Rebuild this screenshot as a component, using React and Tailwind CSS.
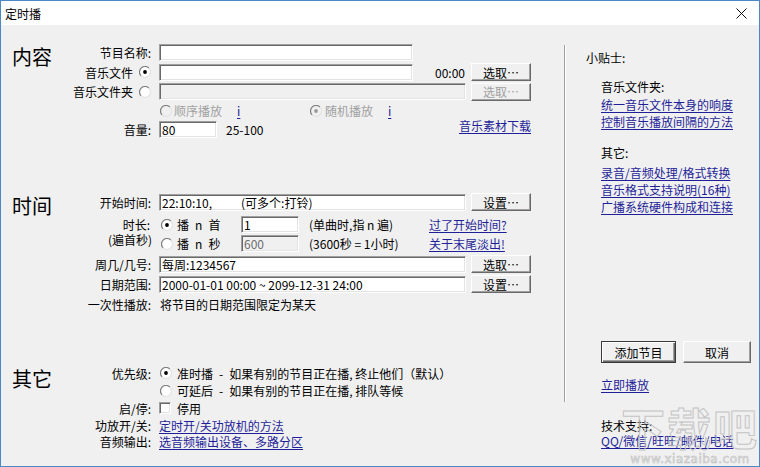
import React from "react";

const LINK = "text-[#1f1f99] underline underline-offset-[2px] decoration-[1px] whitespace-nowrap";

function Radio({ checked = false, disabled = false }) {
  return (
    <svg width="12" height="12" viewBox="0 0 12 12" className="shrink-0 block">
      <circle cx="6" cy="6" r="5" fill={disabled ? "#f0f0f0" : "#ffffff"} />
      <path d="M2.11 9.89 A5.5 5.5 0 0 1 9.89 2.11" fill="none" stroke="#7e7e7e" strokeWidth="1.2" />
      <path d="M9.89 2.11 A5.5 5.5 0 0 1 2.11 9.89" fill="none" stroke="#e4e4e4" strokeWidth="1.2" />
      {checked && <circle cx="6" cy="6" r="1.9" fill={disabled ? "#9a9a9a" : "#000000"} />}
    </svg>
  );
}

function Check() {
  return (
    <div className="w-[12px] h-[12px] shrink-0 bg-white border border-t-[#a0a0a0] border-l-[#a0a0a0] border-r-white border-b-white shadow-[inset_1px_1px_0_#696969,inset_-1px_-1px_0_#e3e3e3]" />
  );
}

function Field({ w, disabled = false, children }) {
  return (
    <div
      className={`h-[17px] ${w} shrink-0 flex items-center pl-[2px] overflow-hidden whitespace-nowrap leading-[15px] border border-t-[#a0a0a0] border-l-[#a0a0a0] border-r-white border-b-white shadow-[inset_1px_1px_0_#696969,inset_-1px_-1px_0_#e3e3e3] ${
        disabled ? "bg-[#f0f0f0] text-[#6d6d6d]" : "bg-white text-black"
      }`}
    >
      {children}
    </div>
  );
}

function Btn({ w, h = "h-[18px]", disabled = false, children }) {
  return (
    <div
      className={`${w} ${h} shrink-0 flex items-center justify-center whitespace-nowrap bg-[#f0f0f0] border border-t-white border-l-white border-r-[#696969] border-b-[#696969] shadow-[inset_-1px_-1px_0_#a0a0a0] ${
        disabled ? "text-[#a0a0a0]" : "text-black"
      }`}
    >
      {children}
    </div>
  );
}

function Label({ children }) {
  return (
    <div className="w-[68px] shrink-0 flex justify-end items-center pr-[2px] whitespace-nowrap">
      {children}
    </div>
  );
}

export default function App() {
  return (
    <div className="relative w-[760px] h-[467px] flex flex-col bg-[#f0f0f0] border border-[#4a8ac4] overflow-hidden text-[12px] leading-[17px] text-black font-['Noto_Sans_CJK_SC',sans-serif]">
      {/* title bar */}
      <div className="h-[24px] shrink-0 bg-white flex items-center justify-between pl-[4px] pr-[12px]">
        <span className="text-[12px]">定时播</span>
        <svg width="11" height="11" viewBox="0 0 11 11" className="block">
          <path d="M0.5 0.5 L10.5 10.5 M10.5 0.5 L0.5 10.5" stroke="#111" strokeWidth="1" />
        </svg>
      </div>

      {/* body */}
      <div className="flex-1 flex">
        {/* left area */}
        <div className="w-[563px] shrink-0 flex flex-col pt-[18px]">
          {/* 内容 */}
          <div className="flex">
            <div className="w-[84px] shrink-0 pl-[11px] text-[20px] leading-[28px]">内容</div>
            <div className="flex flex-col">
              <div className="h-[19px] flex items-center">
                <Label>节目名称:</Label>
                <div className="ml-[6px] flex items-center">
                  <Field w="w-[254px]" />
                </div>
              </div>
              <div className="h-[20px] flex items-center">
                <Label>
                  <span>音乐文件</span>
                  <span className="ml-[6px]"><Radio checked /></span>
                </Label>
                <div className="ml-[6px] flex items-center">
                  <Field w="w-[254px]" />
                  <div className="w-[52px] text-right">00:00</div>
                  <div className="ml-[6px]"><Btn w="w-[60px]">选取⋯</Btn></div>
                </div>
              </div>
              <div className="h-[19px] flex items-center">
                <Label>
                  <span>音乐文件夹</span>
                  <span className="ml-[6px]"><Radio /></span>
                </Label>
                <div className="ml-[6px] flex items-center">
                  <Field w="w-[307px]" disabled />
                  <div className="ml-[5px]"><Btn w="w-[60px]" disabled>选取⋯</Btn></div>
                </div>
              </div>
              <div className="h-[19px] flex items-center">
                <Label />
                <div className="ml-[6px] flex items-center">
                  <div className="w-[151px] flex items-center">
                    <span className="ml-[1px]"><Radio disabled /></span>
                    <span className="ml-[2px] text-[#a0a0a0]">顺序播放</span>
                    <span className={`ml-[15px] ${LINK}`}>i</span>
                  </div>
                  <div className="flex items-center">
                    <Radio checked disabled />
                    <span className="ml-[3px] text-[#a0a0a0]">随机播放</span>
                    <span className={`ml-[15px] ${LINK}`}>i</span>
                  </div>
                </div>
              </div>
              <div className="h-[19px] flex items-center">
                <Label>音量:</Label>
                <div className="ml-[6px] w-[372px] flex items-center">
                  <Field w="w-[58px]">80</Field>
                  <span className="ml-[9px]">25-100</span>
                  <span className={`ml-auto self-start -mt-[4px] ${LINK}`}>音乐素材下载</span>
                </div>
              </div>
            </div>
          </div>

          {/* 时间 */}
          <div className="flex mt-[53px]">
            <div className="w-[84px] shrink-0 pl-[11px] text-[20px] leading-[28px]">时间</div>
            <div className="flex flex-col">
              <div className="h-[20px] flex items-center">
                <Label>开始时间:</Label>
                <div className="ml-[6px] flex items-center">
                  <Field w="w-[307px]">
                    <span className="inline-block w-[79px]">22:10:10,</span>
                    <span>(可多个:打铃)</span>
                  </Field>
                  <div className="ml-[5px]"><Btn w="w-[60px]">设置⋯</Btn></div>
                </div>
              </div>
              <div className="flex mt-[3px]">
                <div className="w-[68px] shrink-0 flex flex-col items-end pr-[1px] pt-[2px] leading-[15px] whitespace-nowrap">
                  <span className="pr-[2px]">时长:</span>
                  <span>(遍首秒)</span>
                </div>
                <div className="ml-[6px] flex flex-col">
                  <div className="h-[19px] flex items-center">
                    <span className="ml-[2px]"><Radio checked /></span>
                    <span className="ml-[4px] w-[64px] whitespace-nowrap">播{"\u2002"}n{"\u2002"}首</span>
                    <Field w="w-[58px]">1</Field>
                    <span className="ml-[10px] w-[120px] whitespace-nowrap">(单曲时,指 n 遍)</span>
                    <span className={LINK}>过了开始时间?</span>
                  </div>
                  <div className="h-[19px] flex items-center">
                    <span className="ml-[2px]"><Radio /></span>
                    <span className="ml-[4px] w-[64px] whitespace-nowrap">播{"\u2002"}n{"\u2002"}秒</span>
                    <Field w="w-[58px]" disabled>600</Field>
                    <span className="ml-[10px] w-[120px] whitespace-nowrap">(3600秒 = 1小时)</span>
                    <span className={LINK}>关于末尾淡出!</span>
                  </div>
                </div>
              </div>
              <div className="h-[20px] mt-[1px] flex items-center">
                <Label>周几/几号:</Label>
                <div className="ml-[6px] flex items-center">
                  <Field w="w-[307px]">每周:1234567</Field>
                  <div className="ml-[5px]"><Btn w="w-[60px]">选取⋯</Btn></div>
                </div>
              </div>
              <div className="h-[20px] flex items-center">
                <Label>日期范围:</Label>
                <div className="ml-[6px] flex items-center">
                  <Field w="w-[307px]">2000-01-01 00:00 ~ 2099-12-31 24:00</Field>
                  <div className="ml-[5px]"><Btn w="w-[60px]">设置⋯</Btn></div>
                </div>
              </div>
              <div className="h-[20px] flex items-center">
                <Label>一次性播放:</Label>
                <span className="ml-[7px] whitespace-nowrap">将节目的日期范围限定为某天</span>
              </div>
            </div>
          </div>

          {/* 其它 */}
          <div className="flex mt-[50px]">
            <div className="w-[84px] shrink-0 pl-[11px] pt-[1px] text-[20px] leading-[28px]">其它</div>
            <div className="flex flex-col">
              <div className="h-[18px] flex items-center">
                <Label>优先级:</Label>
                <div className="ml-[6px] flex items-center whitespace-nowrap">
                  <span className="ml-[1px]"><Radio checked /></span>
                  <span className="ml-[5px]">准时播{"\u2002"}-{"\u2002"}如果有别的节目正在播, 终止他们（默认）</span>
                </div>
              </div>
              <div className="h-[17px] flex items-center">
                <Label />
                <div className="ml-[6px] flex items-center whitespace-nowrap">
                  <span className="ml-[1px]"><Radio /></span>
                  <span className="ml-[5px]">可延后{"\u2002"}-{"\u2002"}如果有别的节目正在播, 排队等候</span>
                </div>
              </div>
              <div className="h-[18px] flex items-center">
                <Label>启/停:</Label>
                <div className="ml-[6px] flex items-center">
                  <Check />
                  <span className="ml-[6px]">停用</span>
                </div>
              </div>
              <div className="h-[17px] flex items-center">
                <Label>功放开/关:</Label>
                <span className={`ml-[6px] ${LINK}`}>定时开/关功放机的方法</span>
              </div>
              <div className="h-[15px] flex items-center">
                <Label>音频输出:</Label>
                <span className={`ml-[6px] ${LINK}`}>选音频输出设备、多路分区</span>
              </div>
            </div>
          </div>
        </div>

        {/* separator */}
        <div className="w-[2px] h-[357px] mt-[20px] shrink-0 border-l border-l-[#a0a0a0] border-r border-r-white" />

        {/* right panel */}
        <div className="flex-1 flex flex-col items-start pl-[35px]">
          <div className="mt-[24px] -ml-[15px]">小贴士:</div>
          <div className="mt-[12px]">音乐文件夹:</div>
          <div className={`mt-[1px] ${LINK}`}>统一音乐文件本身的响度</div>
          <div className={LINK}>控制音乐播放间隔的方法</div>
          <div className="mt-[14px]">其它:</div>
          <div className={`mt-[3px] ${LINK}`}>录音/音频处理/格式转换</div>
          <div className={LINK}>音乐格式支持说明(16种)</div>
          <div className={LINK}>广播系统硬件构成和连接</div>
          <div className="mt-[126px] flex">
            <div className="w-[75px] h-[22px] flex items-center justify-center bg-[#f0f0f0] border border-[#3a3a3a] shadow-[inset_1px_1px_0_#ffffff,inset_-1px_-1px_0_#696969,inset_-2px_-2px_0_#a0a0a0]">
              添加节目
            </div>
            <div className="ml-[7px]"><Btn w="w-[68px]" h="h-[22px]">取消</Btn></div>
          </div>
          <div className={`mt-[13px] ${LINK}`}>立即播放</div>
          <div className="mt-[25px] leading-[15px]">技术支持:</div>
          <div className={`leading-[15px] ${LINK}`}>QQ/微信/旺旺/邮件/电话</div>
        </div>
      </div>

      {/* watermark */}
      <div className="absolute left-[620px] top-[400px] pointer-events-none select-none flex flex-col items-center">
        <span className="text-[44px] leading-[52px] font-bold tracking-[2px] text-transparent [-webkit-text-stroke:1px_#c4c4c4]">下载吧</span>
        <span className="text-[12px] leading-[14px] -mt-[1px] font-['DejaVu_Sans',sans-serif] text-transparent [-webkit-text-stroke:0.6px_#c0c0c0] tracking-[0.5px]">www.xiazaiba.com</span>
      </div>
    </div>
  );
}
